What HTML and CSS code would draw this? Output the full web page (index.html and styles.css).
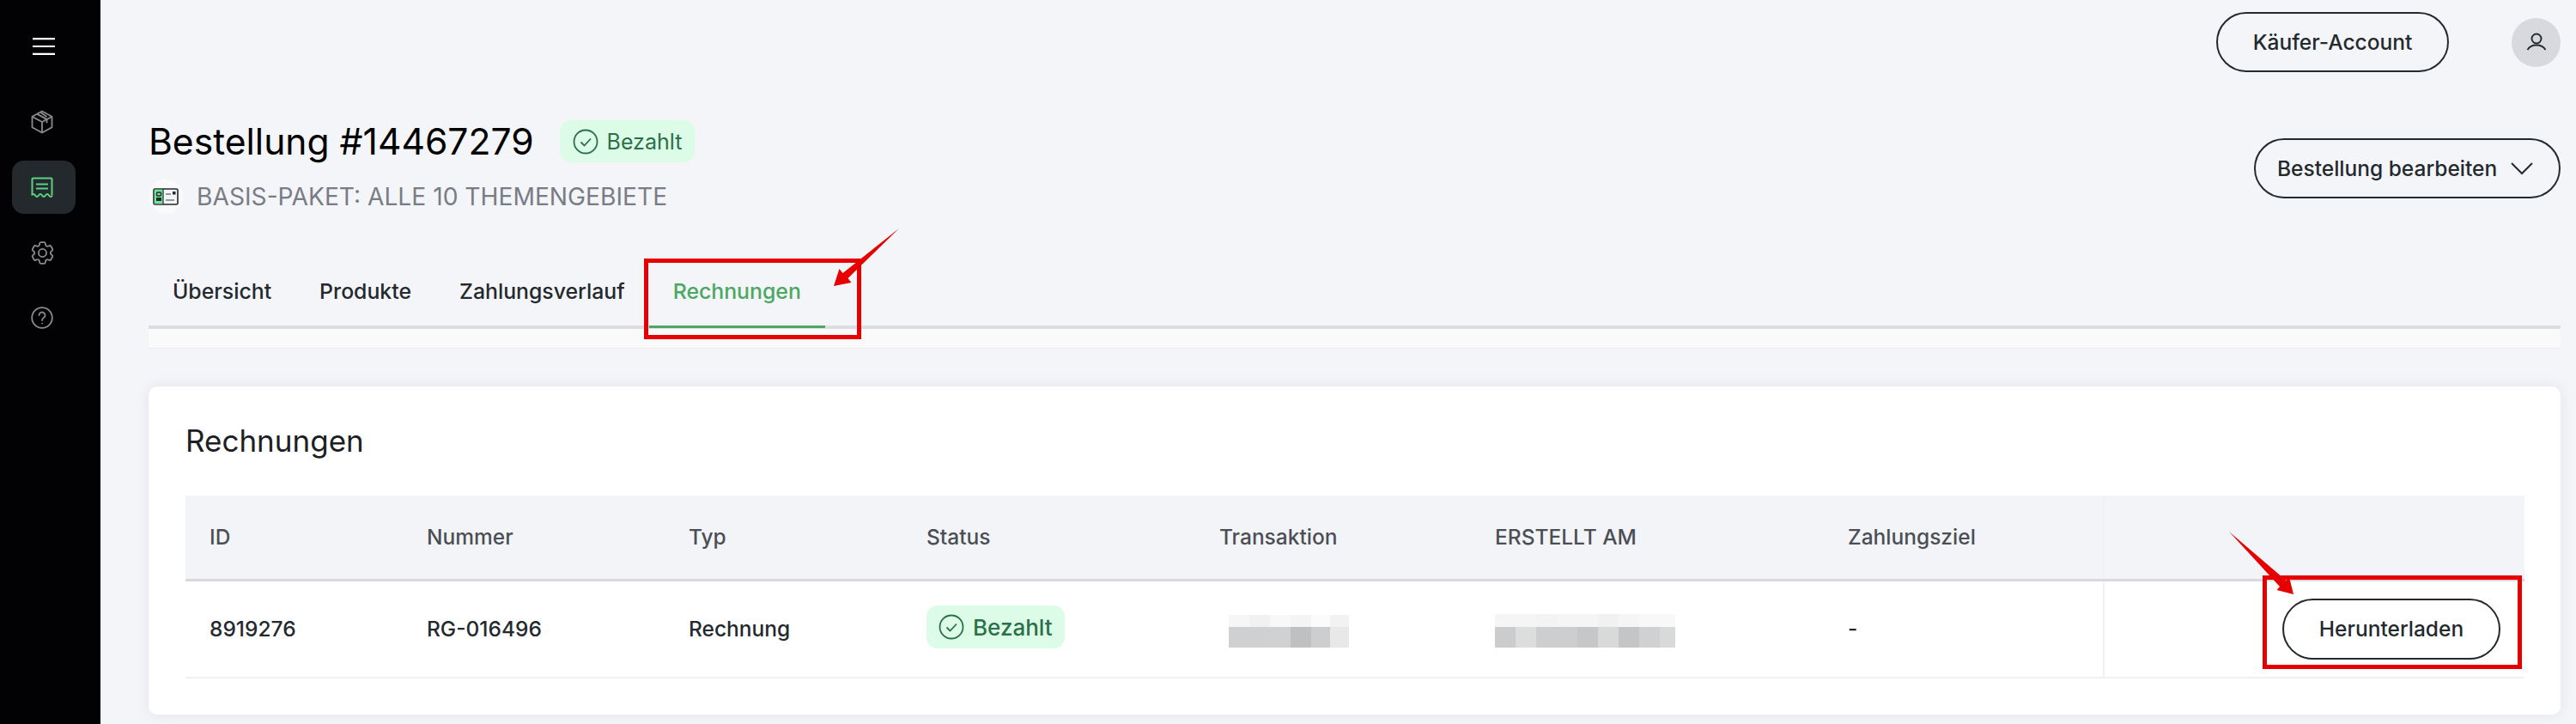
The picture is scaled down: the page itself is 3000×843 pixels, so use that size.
FILE: index.html
```html
<!DOCTYPE html>
<html lang="de">
<head>
  <meta charset="UTF-8" />
  <title>Bestellung #14467279</title>
  <link rel="stylesheet" href="styles.css">
</head>
<body>
  <aside class="sidebar">
    <button class="menu-btn" aria-label="Menü">
      <svg width="26" height="20" viewBox="0 0 26 20"><path d="M0 1.2h26M0 10h26M0 18.8h26" stroke="#fff" stroke-width="2.2"/></svg>
    </button>
    <nav class="side-nav">
      <a class="side-item">
        <svg width="28" height="28" viewBox="0 0 28 28" fill="none" stroke="#8b8b8b" stroke-width="1.8" stroke-linejoin="round"><path d="M14 1.5l11.5 6.2v12.6L14 26.5 2.500 20.300V7.700z"/><path d="M2.500 7.700L14 14l11.500-6.300M14 14v12.500"/><path d="M8 4.600l11.500 6.300v4.300M12.500 3l7 5"/></svg>
      </a>
      <a class="side-item active">
        <svg width="26" height="24" viewBox="0 0 26 24" fill="none" stroke="#5ad283" stroke-width="2"><path d="M1.500 21V2.500a1 1 0 0 1 1-1h21a1 1 0 0 1 1 1V21"/><path d="M1 21.500q2-3 4 0t4 0 4 0 4 0 4 0 4 0"/><path d="M6 8.500h14M6 13.500h14"/></svg>
      </a>
      <a class="side-item">
        <svg width="33" height="33" viewBox="0 0 24 24" fill="none" stroke="#8b8b8b" stroke-width="1.300" stroke-linejoin="round"><path d="M9.594 3.940c.09-.542.56-.94 1.110-.94h2.593c.55 0 1.020.398 1.110.94l.213 1.281c.063.374.313.686.645.870.074.04.147.083.22.127.325.196.72.257 1.075.124l1.217-.456a1.125 1.125 0 0 1 1.370.49l1.296 2.247a1.125 1.125 0 0 1-.26 1.431l-1.003.827c-.293.241-.438.613-.43.992a7.723 7.723 0 0 1 0 .255c-.008.378.137.75.43.991l1.004.827c.424.35.534.955.26 1.430l-1.298 2.247a1.125 1.125 0 0 1-1.369.491l-1.217-.456c-.355-.133-.75-.072-1.076.124a6.470 6.470 0 0 1-.22.128c-.331.183-.581.495-.644.869l-.213 1.281c-.09.543-.56.94-1.110.94h-2.594c-.55 0-1.019-.398-1.110-.94l-.213-1.281c-.062-.374-.312-.686-.644-.87a6.520 6.520 0 0 1-.22-.127c-.325-.196-.72-.257-1.076-.124l-1.217.456a1.125 1.125 0 0 1-1.369-.49l-1.297-2.247a1.125 1.125 0 0 1 .26-1.431l1.004-.827c.292-.24.437-.613.43-.991a6.932 6.932 0 0 1 0-.255c.007-.38-.138-.751-.43-.992l-1.004-.827a1.125 1.125 0 0 1-.26-1.430l1.297-2.247a1.125 1.125 0 0 1 1.370-.491l1.216.456c.356.133.751.072 1.076-.124.072-.044.146-.086.22-.128.332-.183.582-.495.644-.869l.214-1.280z"/><circle cx="12" cy="12" r="3.300"/></svg>
      </a>
      <a class="side-item">
        <svg width="26" height="26" viewBox="0 0 26 26" fill="none" stroke="#8b8b8b" stroke-width="1.800"><circle cx="13" cy="13" r="11.800"/><path d="M9.500 10a3.500 3.500 0 1 1 5.400 3c-1.300.8-1.900 1.500-1.900 3" stroke-linecap="round"/><path d="M13 19v1.200"/></svg>
      </a>
    </nav>
  </aside>

  <div class="content">
    <header class="topbar">
      <button class="btn btn-account">Käufer-Account</button>
      <span class="avatar">
        <svg width="24" height="24" viewBox="0 0 24 24" fill="none" stroke="#24292e" stroke-width="1.900"><circle cx="12" cy="8" r="5.500"/><path d="M1.500 21c2.500-4 6-5.500 10.500-5.500S20 17 22.500 21"/></svg>
      </span>
    </header>

    <section class="order-head">
      <div>
        <div class="order-title">
          <h1>Bestellung #14467279</h1>
          <span class="badge badge-large">
            <svg width="30" height="30" viewBox="0 0 30 30" fill="none" stroke="#2b7049" stroke-width="1.800"><circle cx="15" cy="15" r="13.500"/><path d="M9.500 15.500l4 4 7.500-8"/></svg>
            Bezahlt
          </span>
        </div>
        <div class="order-sub">
          <span class="plan-icon">
            <svg width="30" height="20" viewBox="0 0 30 20"><rect x="1" y="1" width="28" height="18" rx="1.500" fill="#f4f5f9" stroke="#23282d" stroke-width="1.600"/><rect x="1.800" y="1.800" width="10" height="16.400" fill="#6fe596"/><path d="M12 1v18" stroke="#23282d" stroke-width="1.200"/><rect x="4.500" y="5" width="5" height="4" rx="1" fill="none" stroke="#23282d" stroke-width="1.400"/><path d="M4 15v-4h6v4z" fill="#23282d"/><path d="M15 7h6M15 14h10" stroke="#777" stroke-width="1.400"/><rect x="23" y="4" width="3.500" height="3.500" fill="#23282d"/></svg>
          </span>
          BASIS-PAKET: ALLE 10 THEMENGEBIETE
        </div>
      </div>
      <button class="btn btn-edit">
        Bestellung bearbeiten
        <svg width="26" height="15" viewBox="0 0 26 15" fill="none" stroke="#24292e" stroke-width="2"><path d="M1 1l12 12L25 1"/></svg>
      </button>
    </section>

    <nav class="tabs">
      <a class="tab">Übersicht</a>
      <a class="tab">Produkte</a>
      <a class="tab">Zahlungsverlauf</a>
      <a class="tab tab-active">Rechnungen</a>
    </nav>
    <div class="tab-band"></div>

    <section class="card">
      <h2>Rechnungen</h2>
      <table class="invoices">
        <thead>
          <tr>
            <th class="col-id">ID</th>
            <th class="col-num">Nummer</th>
            <th class="col-type">Typ</th>
            <th class="col-status">Status</th>
            <th class="col-trans">Transaktion</th>
            <th class="col-date">ERSTELLT AM</th>
            <th class="col-due">Zahlungsziel</th>
            <th class="col-action"></th>
          </tr>
        </thead>
        <tbody>
          <tr>
            <td>8919276</td>
            <td>RG-016496</td>
            <td>Rechnung</td>
            <td>
              <span class="badge">
                <svg width="30" height="30" viewBox="0 0 30 30" fill="none" stroke="#2b7049" stroke-width="1.800"><circle cx="15" cy="15" r="13.500"/><path d="M9.500 15.500l4 4 7.500-8"/></svg>
                Bezahlt
              </span>
            </td>
            <td>
              <svg class="blur-trans" width="140" height="38" viewBox="0 0 140 38">
                <rect width="24" height="14" fill="#f6f6f6"/><rect x="24" width="24" height="14" fill="#f1f1f1"/><rect x="48" width="24" height="14" fill="#f8f8f8"/><rect x="72" width="24" height="14" fill="#f4f4f4"/><rect x="96" width="22" height="14" fill="#fbfbfb"/><rect x="118" width="22" height="14" fill="#f2f2f2"/>
                <rect y="14" width="48" height="24" fill="#cfd0d1"/><rect x="48" y="14" width="24" height="24" fill="#d0d1d2"/><rect x="72" y="14" width="24" height="24" fill="#bfc0c1"/><rect x="96" y="14" width="22" height="24" fill="#cdcecf"/><rect x="118" y="14" width="22" height="24" fill="#e8e8e8"/>
              </svg>
            </td>
            <td>
              <svg class="blur-date" width="210" height="39" viewBox="0 0 210 39">
                <rect width="210" height="15" fill="#f5f5f5"/><rect x="48" width="24" height="15" fill="#f3f3f3"/><rect x="120" width="24" height="15" fill="#f0f1f0"/><rect x="168" width="42" height="15" fill="#f8f8f8"/>
                <rect y="15" width="24" height="24" fill="#cbcccd"/><rect x="24" y="15" width="24" height="24" fill="#dcdddd"/><rect x="48" y="15" width="48" height="24" fill="#cdcecf"/><rect x="96" y="15" width="24" height="24" fill="#c6c7c8"/><rect x="120" y="15" width="24" height="24" fill="#d8d9d9"/><rect x="144" y="15" width="24" height="24" fill="#c4c5c6"/><rect x="168" y="15" width="24" height="24" fill="#d0d1d2"/><rect x="192" y="15" width="18" height="24" fill="#d8d9d9"/>
              </svg>
            </td>
            <td>-</td>
            <td class="cell-action"><button class="btn btn-download">Herunterladen</button></td>
          </tr>
        </tbody>
      </table>
    </section>
  </div>

  <svg class="marks" width="3000" height="843" viewBox="0 0 3000 843" fill="none">
    <rect x="752.500" y="303.500" width="248" height="89" stroke="#e60000" stroke-width="5"/>
    <path d="M1047 266L987.500 324 991.500 329 971 333 977.500 313 981.500 318z" fill="#e60000"/>
    <rect x="2637.500" y="672.500" width="297" height="104" stroke="#e60000" stroke-width="5"/>
    <path d="M2596 619L2662.500 676 2666 672 2671 692 2651.500 687 2655 683z" fill="#e60000"/>
  </svg>
</body>
</html>
```

FILE: styles.css
```css
:root {
  --bg: #f4f5f9;
  --ink: #24292e;
  --green: #2b7049;
  --green-bg: #dcfce7;
}

* {
  margin: 0;
  padding: 0;
  box-sizing: border-box;
}

html, body {
  height: 843px;
  overflow: hidden;
}

body {
  font-family: Inter, 'Noto Sans', sans-serif;
  background-color: var(--bg);
  color: var(--ink);
  display: flex;
  position: relative;
}

button {
  font-family: inherit;
}

/* Sidebar */
.sidebar {
  width: 117px;
  flex-shrink: 0;
  background-color: #020204;
  display: flex;
  flex-direction: column;
}

.menu-btn {
  background: none;
  border: none;
  height: 20px;
  margin: 44px 0 47px 38px;
  width: 26px;
  display: block;
}

.menu-btn svg {
  display: block;
}

.side-nav {
  display: flex;
  flex-direction: column;
  gap: 14px;
  margin-left: 14px;
  width: 74px;
}

.side-item {
  height: 62px;
  border-radius: 14px;
  display: flex;
  align-items: center;
  justify-content: center;
  padding-right: 4px;
}

.side-item.active {
  background-color: #24292e;
}

/* Main column */
.content {
  flex: 1;
  min-width: 0;
  padding: 14px 18px 0 56px;
  display: flex;
  flex-direction: column;
}

.topbar {
  display: flex;
  justify-content: flex-end;
  align-items: center;
  gap: 73px;
  height: 70px;
}

.btn {
  background: none;
  border: 2px solid var(--ink);
  border-radius: 36px;
  height: 70px;
  font-size: 24.5px;
  font-weight: 500;
  color: var(--ink);
  cursor: pointer;
}

.btn-account {
  width: 271px;
}

.avatar {
  width: 57px;
  height: 57px;
  border-radius: 50%;
  background-color: #d8d9de;
  display: flex;
  align-items: center;
  justify-content: center;
}

.order-head {
  display: flex;
  justify-content: space-between;
  align-items: flex-start;
  margin-top: 56px;
  height: 122px;
}

.order-title {
  display: flex;
  align-items: center;
  gap: 30px;
  height: 49px;
}

h1 {
  font-size: 42.6px;
  font-weight: 400;
  color: #000;
  line-height: 49px;
}

.badge {
  display: inline-flex;
  align-items: center;
  gap: 10px;
  height: 50px;
  padding: 0 14px;
  border-radius: 13px;
  background-color: var(--green-bg);
  color: var(--green);
  font-size: 26px;
  font-weight: 500;
}

.badge-large {
  font-size: 25px;
  font-weight: 400;
  height: 49px;
  padding: 0 15px;
}

.order-sub {
  display: flex;
  align-items: center;
  gap: 16px;
  margin-top: 19px;
  font-size: 28.2px;
  color: #7a7c85;
}

.plan-icon {
  width: 40px;
  height: 41px;
  border-radius: 50%;
  background-color: #fafafb;
  display: flex;
  align-items: center;
  justify-content: center;
}

.btn-edit {
  margin-top: 21px;
  width: 357px;
  padding-left: 25px;
  display: flex;
  align-items: center;
  gap: 16px;
}

/* Tabs */
.tabs {
  display: flex;
  height: 96px;
  margin-top: 25px;
  border-bottom: 4px solid #dcdde1;
}

.tab {
  font-size: 24.8px;
  font-weight: 500;
  padding: 0 28px;
  line-height: 104px;
  height: 96px;
  color: #24292e;
}

.tab-active {
  color: #4aa862;
  border-bottom: 3px solid #4aa862;
  height: 95px;
}

.tab-band {
  height: 23px;
  background-color: #fafafa;
  border-bottom: 1px solid #ecedf0;
}

/* Card */
.card {
  margin-top: 44px;
  height: 382px;
  background-color: #fff;
  border-radius: 10px;
  padding: 0 42px 0 43px;
  box-shadow: 0 0 16px rgba(40, 44, 70, 0.09);
}

h2 {
  font-size: 35px;
  font-weight: 400;
  color: #1c2024;
  line-height: 127px;
  height: 127px;
}

.invoices {
  width: 100%;
  table-layout: fixed;
  border-collapse: collapse;
  font-size: 24.5px;
}

.invoices th {
  background-color: #f3f4f8;
  height: 98px;
  font-weight: 500;
  color: #4b4f55;
  text-align: left;
  padding-left: 28px;
  border-bottom: 3px solid #d8d9e0;
}

.invoices td {
  height: 114px;
  font-weight: 500;
  padding-left: 28px;
  border-bottom: 2px solid #f0f0f5;
}

.col-id { width: 253px; }
.col-num { width: 305px; }
.col-type { width: 277px; }
.col-status { width: 341px; }
.col-trans { width: 321px; }
.col-date { width: 411px; }
.col-due { width: 326px; }

.col-action,
.cell-action {
  border-left: 2px solid #f0f0f5;
}

.invoices td svg {
  display: block;
}

.invoices td .badge svg {
  display: inline;
}

.invoices td .badge {
  margin-bottom: 4px;
}

.blur-trans {
  margin-left: 11px;
  margin-top: 6px;
}

.blur-date {
  margin-top: 4px;
}

.invoices .cell-action {
  padding: 0 28px 0 0;
  text-align: right;
}

.btn-download {
  width: 254px;
  height: 71px;
  background-color: #fff;
}

/* Red marks drawn on top of the screenshot */
.marks {
  position: absolute;
  left: 0;
  top: 0;
  pointer-events: none;
}
```
